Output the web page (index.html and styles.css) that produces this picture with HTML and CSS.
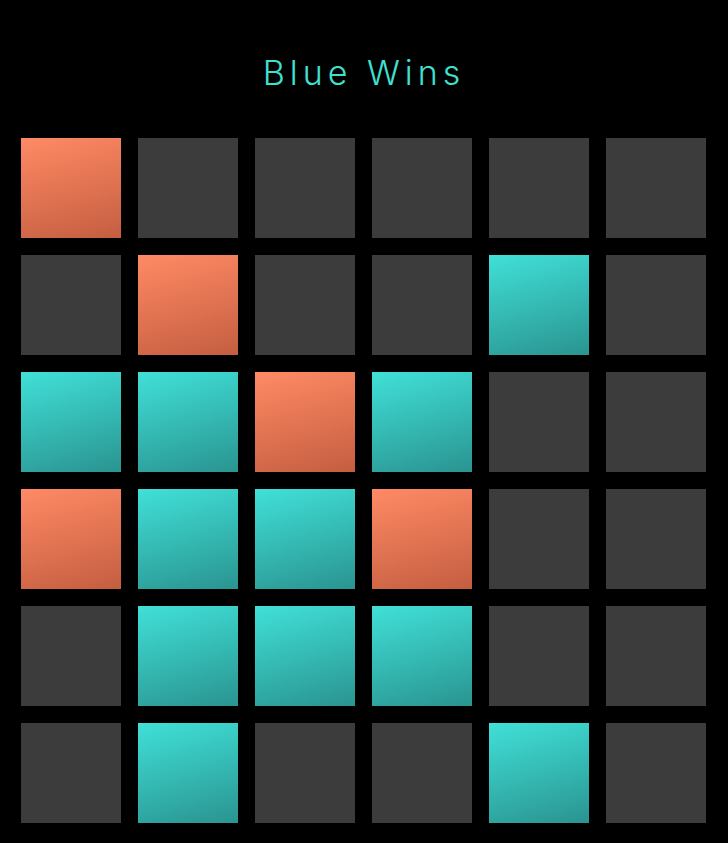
FILE: index.html
```html
<!DOCTYPE html>
<html>
<head>
<meta charset="utf-8">
<link rel="stylesheet" href="styles.css">
</head>
<body>
<div class="app">
  <h1 class="title">Blue Wins</h1>
  <div class="board">
    <div class="cell red"></div><div class="cell"></div><div class="cell"></div><div class="cell"></div><div class="cell"></div><div class="cell"></div>
    <div class="cell"></div><div class="cell red"></div><div class="cell"></div><div class="cell"></div><div class="cell blue"></div><div class="cell"></div>
    <div class="cell blue"></div><div class="cell blue"></div><div class="cell red"></div><div class="cell blue"></div><div class="cell"></div><div class="cell"></div>
    <div class="cell red"></div><div class="cell blue"></div><div class="cell blue"></div><div class="cell red"></div><div class="cell"></div><div class="cell"></div>
    <div class="cell"></div><div class="cell blue"></div><div class="cell blue"></div><div class="cell blue"></div><div class="cell"></div><div class="cell"></div>
    <div class="cell"></div><div class="cell blue"></div><div class="cell"></div><div class="cell"></div><div class="cell blue"></div><div class="cell"></div>
  </div>
</div>
</body>
</html>
```

FILE: styles.css
```css
html, body {
  margin: 0;
  padding: 0;
  background: #000;
}
.app {
  width: 728px;
  height: 843px;
  overflow: hidden;
}
.title {
  margin: 0;
  height: 138px;
  box-sizing: border-box;
  padding-top: 53px;
  text-align: center;
  font-family: "Inter", "DejaVu Sans", sans-serif;
  font-weight: 300;
  font-size: 34px;
  line-height: 40px;
  letter-spacing: 5px;
  color: #40e0d0;
}
.board {
  display: grid;
  grid-template-columns: repeat(6, 100px);
  grid-auto-rows: 100px;
  gap: 17px;
  padding-left: 21px;
}
.cell {
  background: #3c3c3c;
}
.cell.red {
  background: linear-gradient(165deg, #ff8a65 0%, #c45e40 100%);
}
.cell.blue {
  background: linear-gradient(165deg, #40e0d8 0%, #2a9490 100%);
}
```
